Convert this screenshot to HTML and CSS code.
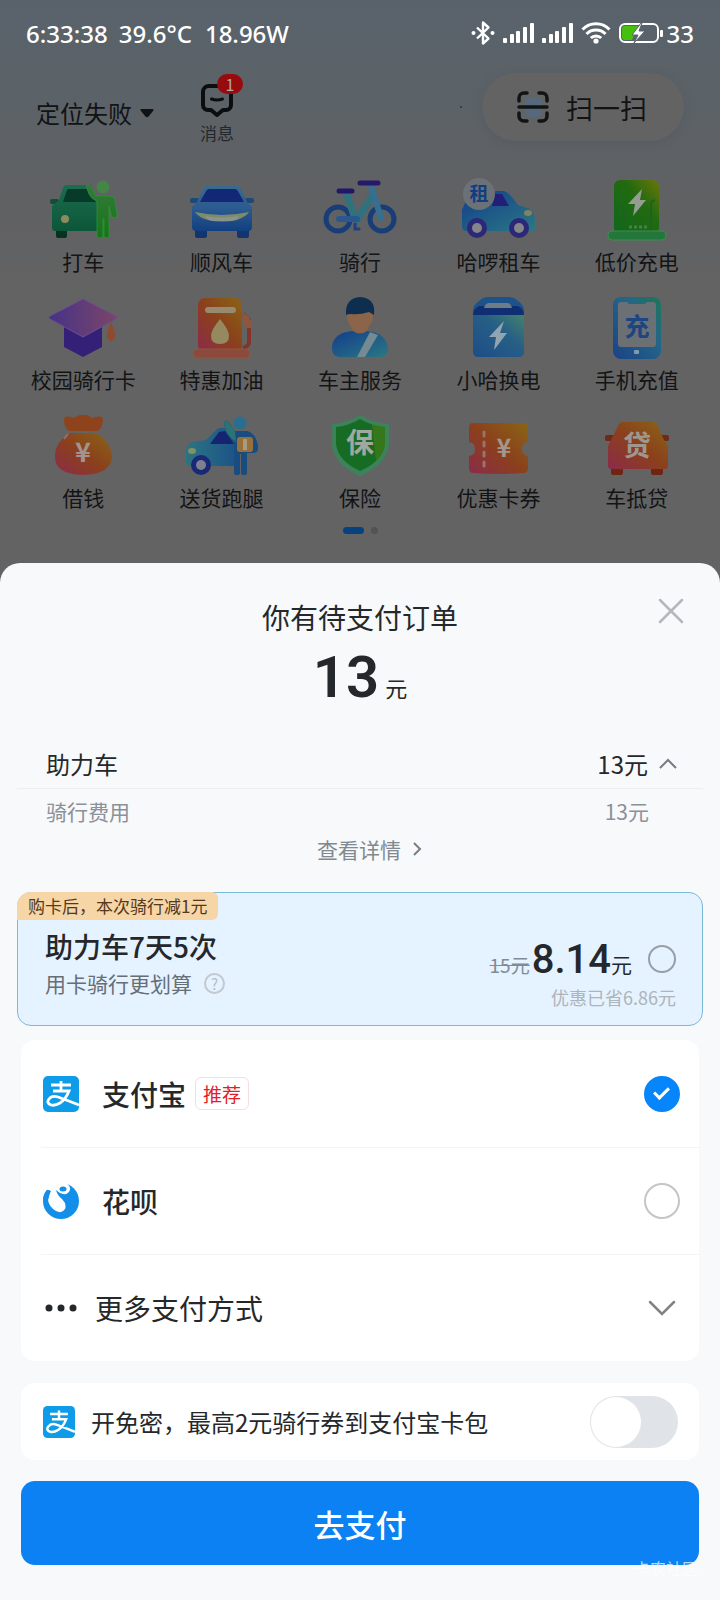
FILE: index.html
```
<!DOCTYPE html>
<html lang="zh-CN">
<head>
  <meta charset="UTF-8" />
  <meta name="viewport" content="width=device-width, initial-scale=1.0"/>
  <title>待支付订单</title>
  <link rel="stylesheet" href="styles.css">
</head>
<body>

<!-- 状态栏 -->
<div class="status-bar">
  <div class="status-left">
    <span>6:33:38</span>
    <span>39.6°C</span>
    <span class="status-power">18.96W</span>
  </div>
  <div class="status-right">
    <svg width="24" height="26" viewBox="0 0 24 26" fill="none" stroke="#fff" stroke-width="2.4">
      <path d="M6 7.500 17.500 18.500 12 23.500V2.500l5.500 5L6 18.500" stroke-linejoin="round"/>
      <circle cx="2.500" cy="13" r="2" fill="#fff" stroke="none"/>
      <circle cx="21.500" cy="13" r="2" fill="#fff" stroke="none"/>
    </svg>
    <svg width="31" height="20" viewBox="0 0 31 20" fill="#fff">
      <rect x="0" y="15" width="4" height="5" rx="1"/><rect x="7" y="11" width="4" height="9" rx="1"/>
      <rect x="13" y="8" width="4" height="12" rx="1"/><rect x="20" y="4" width="4" height="16" rx="1"/>
      <rect x="27" y="0" width="4" height="20" rx="1"/>
    </svg>
    <svg width="31" height="20" viewBox="0 0 31 20" fill="#fff">
      <rect x="0" y="15" width="4" height="5" rx="1"/><rect x="7" y="11" width="4" height="9" rx="1"/>
      <rect x="13" y="8" width="4" height="12" rx="1"/><rect x="20" y="4" width="4" height="16" rx="1"/>
      <rect x="27" y="0" width="4" height="20" rx="1"/>
    </svg>
    <svg width="30" height="22" viewBox="0 0 30 22" fill="none" stroke="#fff" stroke-width="3">
      <path d="M1.500 7.500a19 19 0 0 1 27 0M5.500 12a13.500 13.500 0 0 1 19 0M9.800 16a7.500 7.500 0 0 1 10.400 0"/>
      <circle cx="15" cy="19" r="2.600" fill="#fff" stroke="none"/>
    </svg>
    <svg class="battery" width="44" height="22" viewBox="0 0 44 22">
      <rect x="1" y="2" width="38" height="18" rx="5" fill="none" stroke="#fff" stroke-width="2"/>
      <path d="M6 4h13l-6 14H6a3 3 0 0 1-3-3V7a3 3 0 0 1 3-3z" fill="#45c00d"/>
      <path d="M22 1 13 13h6l-4 8 11-12h-6l3-8z" fill="#fff" stroke="#5a626b" stroke-width="1"/>
      <rect x="41" y="8" width="3" height="7" rx="1" fill="#fff"/>
    </svg>
    <span>33</span>
  </div>
</div>

<!-- 顶部栏 -->
<div class="top-bar">
  <button class="location">定位失败
    <svg width="14" height="9" viewBox="0 0 14 9"><path d="M1.500 0h11q2 0 .5 2L8.500 7.500q-1.500 1.500-3 0L1 2Q-.5 0 1.500 0z" fill="#101214"/></svg>
  </button>
  <button class="message">
    <svg width="34" height="34" viewBox="0 0 34 34" fill="none" stroke="#0c0d0f" stroke-width="4" stroke-linecap="round" stroke-linejoin="round">
      <path d="M9 3h16a6 6 0 0 1 6 6v13a5 5 0 0 1-5 5h-3l-6 5-6-5H8a5 5 0 0 1-5-5V9a6 6 0 0 1 6-6z"/>
      <path d="M11.500 16q5.500 2 11 0" stroke-width="3"/>
    </svg>
    <span class="msg-badge">1</span>
    <span>消息</span>
  </button>
  <span class="speck"></span>
  <button class="scan">
    <svg width="34" height="34" viewBox="0 0 34 34" fill="none" stroke="#111315" stroke-width="3.500" stroke-linecap="round">
      <path d="M12 7h11q2 0 3 3v14q-2 3-4 3H12q-2 0-3-3V10q1-3 3-3z" fill="#56697c" stroke="none"/>
      <path d="M3 11V8a5 5 0 0 1 5-5h3M23 3h3a5 5 0 0 1 5 5v3M31 23v3a5 5 0 0 1-5 5h-3M11 31H8a5 5 0 0 1-5-5v-3M3 17h28"/>
    </svg>
    扫一扫
  </button>
</div>

<!-- 服务入口 -->
<div class="services">
  <div class="service">
    <svg viewBox="0 0 76 64">
      <defs>
        <linearGradient id="gGreen" x1="0" y1="0" x2="0" y2="1"><stop offset="0" stop-color="#1c6d50"/><stop offset="1" stop-color="#0c5638"/></linearGradient>
        <linearGradient id="gLime" x1="0" y1="0" x2="0" y2="1"><stop offset="0" stop-color="#347a3b"/><stop offset="1" stop-color="#167419"/></linearGradient>
        <linearGradient id="gBlue" x1="0" y1="0" x2="0" y2="1"><stop offset="0" stop-color="#3b6c8e"/><stop offset=".5" stop-color="#2b5b91"/><stop offset="1" stop-color="#123f80"/></linearGradient>
        <linearGradient id="gTeal" x1="0" y1="0" x2="1" y2="1"><stop offset="0" stop-color="#123e8b"/><stop offset="1" stop-color="#2b7883"/></linearGradient>
        <linearGradient id="gOrange" x1="0" y1="1" x2="1" y2="0"><stop offset="0" stop-color="#8b2b4a"/><stop offset=".5" stop-color="#8b401c"/><stop offset="1" stop-color="#896516"/></linearGradient>
        <linearGradient id="gPurple" x1="0" y1="0" x2="1" y2="0"><stop offset="0" stop-color="#453387"/><stop offset="1" stop-color="#7c4569"/></linearGradient>
      </defs>
      <rect x="11" y="50" width="11" height="10" rx="2" fill="#06321f"/>
      <rect x="5" y="21" width="9" height="5" rx="2" fill="#124d35"/>
      <path d="M21 7h25l7 17v29H10q-3 0-3-3V28l7-6 4-12q1-3 3-3z" fill="url(#gGreen)"/>
      <path d="M23 11h19l9 13H18l4-12z" fill="#073a29"/>
      <circle cx="20" cy="41" r="4" fill="#8d8a5e"/>
      <path d="M41 8q3-2 5 1l5 9h14q4 0 5 4l2 15q0 3-3 3-2 0-3-3l-2-9v30q0 2-3 2-2 0-2-2V41h-1v17q0 2-3 2-3 0-3-2V23q-6-2-8-7z" fill="url(#gLime)" stroke="#319239" stroke-width=".8"/>
      <circle cx="58" cy="9" r="6.500" fill="#458547"/>
    </svg>
    <span>打车</span>
  </div>
  <div class="service">
    <svg viewBox="0 0 76 64">
      <rect x="11" y="50" width="12" height="10" rx="2" fill="#12356f"/><rect x="53" y="50" width="12" height="10" rx="2" fill="#12356f"/>
      <rect x="6" y="20" width="9" height="5" rx="2" fill="#1c497a"/><rect x="61" y="20" width="9" height="5" rx="2" fill="#1c497a"/>
      <path d="M24 7h28q3 0 5 4l6 13 5 5v20q0 4-4 4H12q-4 0-4-4V29l5-5 6-13q2-4 5-4z" fill="url(#gBlue)"/>
      <path d="M25 11h26q2 0 4 4l5 9H16l5-9q2-4 4-4z" fill="#132777"/>
      <path d="M11 34q27 6 54 0-2 4-12 8-15 3-29 0-10-3-13-8z" fill="#7d8b69"/>
      <path d="M21 38q17 3 34 0-2 5-10 5H31q-8 0-10-5z" fill="#8b938f"/>
    </svg>
    <span>顺风车</span>
  </div>
  <div class="service">
    <svg viewBox="0 0 76 64" fill="none" stroke-linecap="round">
      <circle cx="16" cy="41" r="12" stroke="#193d76" stroke-width="5"/>
      <circle cx="60" cy="41" r="12" stroke="#193d76" stroke-width="5"/>
      <path d="m25 17 8 24M34 43l17-26" stroke="#30717e" stroke-width="7"/>
      <path d="M17 41h18" stroke="#2c578e" stroke-width="6"/>
      <path d="m49 8 10 32" stroke="#356f91" stroke-width="6"/>
      <path d="M17 13h13" stroke="#23156a" stroke-width="5"/>
      <path d="M38 5h18" stroke="#261969" stroke-width="5"/>
      <path d="M33 46v5h4" stroke="#233e80" stroke-width="3"/>
    </svg>
    <span>骑行</span>
  </div>
  <div class="service">
    <svg viewBox="0 0 76 64">
      <path d="M5 25 36 13h8q5 1 14 14l12 4q5 4 5 11v8q0 3-3 3H5q-3-1-3-5V32z" fill="url(#gTeal)"/>
      <path d="M35 16h7l7 12H32z" fill="#231e77"/>
      <ellipse cx="68" cy="35" rx="4" ry="3" fill="#84815c"/>
      <circle cx="17" cy="50" r="10" fill="#2c2777"/><circle cx="17" cy="50" r="5" fill="#84858b"/>
      <circle cx="59" cy="50" r="10" fill="#2c2777"/><circle cx="59" cy="50" r="5" fill="#84858b"/>
      <circle cx="19" cy="16" r="16" fill="#6c7177"/>
      <text x="19" y="23" font-size="19" class="icon-text" fill="#103f80">租</text>
    </svg>
    <span>哈啰租车</span>
  </div>
  <div class="service">
    <svg viewBox="0 0 76 64">
      <defs><linearGradient id="gPile" x1="0" y1="1" x2="1" y2="0"><stop offset="0" stop-color="#0f671d"/><stop offset=".6" stop-color="#226a10"/><stop offset="1" stop-color="#6b760a"/></linearGradient></defs>
      <rect x="15" y="2" width="45" height="54" rx="6" fill="url(#gPile)"/>
      <path d="M25 54V30h-4M52 54V28q0-5 4-6" fill="none" stroke="#1a641b" stroke-width="2"/>
      <path d="M30 49h18" stroke="#4a7f4a" stroke-width="3" stroke-dasharray="3 2"/>
      <rect x="9" y="53" width="58" height="9" rx="4" fill="#23773b" stroke="#3c8d52"/>
      <path d="M43 11 29 26h7l-2 12 13-16h-6z" fill="#949c94"/>
    </svg>
    <span>低价充电</span>
  </div>

  <div class="service">
    <svg viewBox="0 0 76 64">
      <path d="M19 28v23l19 10 19-10V28z" fill="#352077"/>
      <path d="M38 3 71 20q2 2 0 3L38 41 5 23q-2-1 0-3z" fill="url(#gPurple)" stroke="#6b4e91"/>
      <path d="M66 26q-5 11-4 15 1 4 4 4t4-4q1-4-4-15z" fill="#8e4b2f"/>
    </svg>
    <span>校园骑行卡</span>
  </div>
  <div class="service">
    <svg viewBox="0 0 76 64">
      <path d="m59 18 6 6v22q0 4-6 6" fill="none" stroke="#84352b" stroke-width="4"/>
      <path d="m58 16 6 4 3 5v7h-5l-3-5z" fill="#8d563f"/>
      <rect x="14" y="2" width="44" height="54" rx="7" fill="url(#gOrange)"/>
      <rect x="21" y="11" width="31" height="6" rx="3" fill="#988a70"/>
      <path d="M36 23q-9 11-9 17 0 8 9 8t9-8q0-6-9-17z" fill="#94895f"/>
      <rect x="9" y="53" width="57" height="9" rx="4" fill="#8c4a3c" stroke="#8e573e"/>
    </svg>
    <span>特惠加油</span>
  </div>
  <div class="service">
    <svg viewBox="0 0 76 64">
      <path d="M10 50q2-14 22-15h13q19 2 21 17 1 8-7 9H17q-8-1-7-11z" fill="url(#gTeal)"/>
      <path d="M48 36 35 61h8l13-22z" fill="#738b91"/>
      <path d="M25 16h26q1 8-3 13-2 3-3 6-7 5-14 0-1-3-3-6-4-5-3-13z" fill="#8b6449"/>
      <path d="M24 19q-1-17 14-18 16 1 14 18l-5-3q-10 3-18 2-3 0-5 1z" fill="#0d2e4e"/>
    </svg>
    <span>车主服务</span>
  </div>
  <div class="service">
    <svg viewBox="0 0 76 64">
      <defs><linearGradient id="gCell" x1="0" y1="1" x2="1" y2="0"><stop offset="0" stop-color="#1c4d88"/><stop offset=".6" stop-color="#275f86"/><stop offset="1" stop-color="#43826b"/></linearGradient></defs>
      <path d="M28 1h21q5 0 9 4 6 4 6 10v40q0 6-6 6H19q-6 0-6-6V15q0-6 6-10 4-4 9-4z" fill="#1d538b"/>
      <path d="M13 19h51v36q0 6-6 6H19q-6 0-6-6z" fill="url(#gCell)"/>
      <path d="M13 19q0-6 6-9h39q6 3 6 9z" fill="#102f72"/>
      <path d="M28 7h20q3 1 4 5H24q1-4 4-5z" fill="#6d7c86"/>
      <path d="M44 25 29 41h7l-2 13 13-17h-7z" fill="#91a4b0"/>
    </svg>
    <span>小哈换电</span>
  </div>
  <div class="service">
    <svg viewBox="0 0 76 64">
      <defs><linearGradient id="gPhone" x1="0" y1="1" x2="1" y2="0"><stop offset="0" stop-color="#1b4287"/><stop offset=".6" stop-color="#23658a"/><stop offset="1" stop-color="#1d7857"/></linearGradient></defs>
      <rect x="14" y="1" width="48" height="62" rx="8" fill="url(#gPhone)"/>
      <path d="M22 6h6l2 2h16l2-2h6q3 0 3 3v39q0 3-3 3H22q-3 0-3-3V9q0-3 3-3z" fill="#6b7074"/>
      <rect x="35" y="54" width="5" height="4" rx="1" fill="#839aa8"/>
      <text x="38" y="40" font-size="25" class="icon-text" fill="#1c4581">充</text>
    </svg>
    <span>手机充值</span>
  </div>

  <div class="service">
    <svg viewBox="0 0 76 64">
      <path d="M19 6q0-5 6-3l4 1q5-4 9-3 4-1 9 3l4-1q7-2 7 3-1 8-5 11H24q-5-4-5-11z" fill="#8f431c"/>
      <path d="M25 19h26q15 9 16 23 0 18-29 19-29-1-28-19 0-14 15-23z" fill="url(#gOrange)"/>
      <path d="m23 20-4 5" stroke="#967169" stroke-width="2"/>
      <text x="38" y="48" font-size="27" class="icon-text" fill="#a29393">¥</text>
    </svg>
    <span>借钱</span>
  </div>
  <div class="service">
    <svg viewBox="0 0 76 64">
      <defs><linearGradient id="gVan" x1="0" y1="0" x2="1" y2="0"><stop offset="0" stop-color="#2c7481"/><stop offset="1" stop-color="#1d5389"/></linearGradient></defs>
      <path d="M29 19q5-6 11-5l12 8v30H6q-4 0-4-4V36q0-5 6-8l14-2z" fill="url(#gVan)"/>
      <path d="m35 18 6-1 9 13H26z" fill="#152471"/>
      <ellipse cx="8" cy="37" rx="4" ry="3" fill="#809162"/>
      <circle cx="17" cy="51" r="10" fill="#192877"/><circle cx="17" cy="51" r="5" fill="#7d818e"/>
      <path d="M40 8q2-3 5 0l6 9h12q9 2 11 15v4q-1 3-5 3h-6v20q0 2-3 2t-3-2V40h-1v19q0 2-3 2t-3-2V28q-9-7-10-20z" fill="#194c81"/>
      <path d="M40 8q2-3 5 0l6 9 1 11q-11-7-12-20z" fill="#2b7376"/>
      <circle cx="56" cy="9" r="6.500" fill="#296f91"/>
      <rect x="53" y="23" width="16" height="15" rx="3" fill="#987039"/><path d="M59 25h4v11h-4z" fill="#a99b82"/>
    </svg>
    <span>送货跑腿</span>
  </div>
  <div class="service">
    <svg viewBox="0 0 76 64">
      <path d="M38 1q14 8 29 9v20q-2 21-29 32Q12 51 10 30V10q15-1 28-9z" fill="#3c825b"/>
      <path d="M38 5q12 7 25 8v17q-2 17-25 27Q16 47 14 30V13q12-1 24-8z" fill="#176c24"/>
      <path d="M50 10q6 2 13 3v17q-1 10-9 17z" fill="#4d7e18" opacity=".6"/>
      <text x="38" y="39" font-size="28" class="icon-text" fill="#a1a8a1">保</text>
    </svg>
    <span>保险</span>
  </div>
  <div class="service">
    <svg viewBox="0 0 76 64">
      <path d="M13 9h50q5 0 5 5v14q-6 1-6 7t6 7v12q0 5-5 5-25 2-50 0-4 0-4-5V42q6-1 6-7t-6-7V14q0-5 4-5z" fill="url(#gOrange)"/>
      <path d="M24 18v34" stroke="#9a7567" stroke-width="3" stroke-linecap="round" stroke-dasharray="4 6"/>
      <text x="44" y="43" font-size="25" class="icon-text" fill="#a2978e">¥</text>
    </svg>
    <span>优惠卡券</span>
  </div>
  <div class="service">
    <svg viewBox="0 0 76 64">
      <rect x="12" y="50" width="12" height="11" rx="2" fill="#6d2611"/><rect x="52" y="50" width="12" height="11" rx="2" fill="#6d2611"/>
      <rect x="6" y="21" width="10" height="6" rx="2" fill="#6f2917"/><rect x="60" y="21" width="10" height="6" rx="2" fill="#6f2917"/>
      <path d="M24 8h29q4 0 6 4l5 12 5 8v20q0 3-3 3H12q-3 0-3-3V32l4-8 6-12q1-4 5-4z" fill="url(#gOrange)"/>
      <text x="38" y="42" font-size="28" class="icon-text" fill="#a09690">贷</text>
    </svg>
    <span>车抵贷</span>
  </div>
</div>
<div class="pager"><span class="pager-on"></span><span class="pager-off"></span></div>

<!-- 支付弹层 -->
<form class="sheet">
  <button type="button" class="close" aria-label="关闭">
    <svg width="26" height="26" viewBox="0 0 26 26" fill="none" stroke="#b4b8bb" stroke-width="2.500" stroke-linecap="round"><path d="m2 2 22 22M24 2 2 24"/></svg>
  </button>
  <h1 class="title">你有待支付订单</h1>
  <div class="total"><strong>13</strong><span>元</span></div>

  <div class="fee-head">
    <span>助力车</span>
    <span class="fee-price">13元</span>
    <svg width="18" height="12" viewBox="0 0 18 12" fill="none" stroke="#777c80" stroke-width="2"><path d="m1 10 8-8 8 8"/></svg>
  </div>
  <div class="fee-row"><span>骑行费用</span><span>13元</span></div>
  <a class="detail" href="#">查看详情
    <svg width="10" height="16" viewBox="0 0 10 16" fill="none" stroke="#777f86" stroke-width="2"><path d="m1 2 6 6-6 6"/></svg>
  </a>

  <!-- 骑行卡 -->
  <div class="ride-card">
    <span class="card-tag">购卡后，本次骑行减1元</span>
    <div class="card-info">
      <label class="card-name" for="rideCard">助力车7天5次</label>
      <span class="card-desc">用卡骑行更划算 <i class="help">?</i></span>
    </div>
    <div class="card-price">
      <div class="price-line">
        <div class="price"><del>15元</del><strong>8.14</strong><span>元</span></div>
        <input type="checkbox" class="pick pick-small" id="rideCard">
      </div>
      <span class="saved">优惠已省6.86元</span>
    </div>
  </div>

  <!-- 支付方式 -->
  <div class="panel pay-list">
    <label class="pay-row">
      <svg class="pay-icon" viewBox="0 0 36 36"><rect width="36" height="36" rx="5" fill="#0e9ce8"/>
        <path d="M18 5v9M8 9h20M10 15h16q-3 8-9 12-5 3-9 2-5-2-2-6 3-4 9-2 11 4 21 8" fill="none" stroke="#fff" stroke-width="2.800"/></svg>
      <span class="pay-name">支付宝</span>
      <span class="tag">推荐</span>
      <input type="radio" class="pick" name="pay" checked>
    </label>
    <label class="pay-row">
      <svg class="pay-icon" viewBox="0 0 36 36">
        <circle cx="18" cy="18" r="18" fill="#138ee9"/>
        <path d="M9 0 22-1q6 4 5 8-2 5-7 4-4-1-7-4 1 5 6 9 5 5 3 10-3 5-9 2-7-4-8-11 0-5 3-9L2 6z" fill="#fff"/>
        <path d="M0 16Q1 9 5 7q3 0 2 3l-2 7-3 3z" fill="#138ee9"/>
        <ellipse cx="20" cy="6" rx="3.500" ry="2.500" fill="#138ee9"/></svg>
      <span class="pay-name">花呗</span>
      <input type="radio" class="pick" name="pay">
    </label>
    <button type="button" class="pay-row more">
      <svg width="32" height="8" viewBox="0 0 32 8" fill="#25282b"><circle cx="4" cy="4" r="3.500"/><circle cx="16" cy="4" r="3.500"/><circle cx="28" cy="4" r="3.500"/></svg>
      <span>更多支付方式</span>
      <svg class="more-arrow" width="28" height="18" viewBox="0 0 28 18" fill="none" stroke="#7f8386" stroke-width="2.500" stroke-linecap="round"><path d="m2 3 12 12L26 3"/></svg>
    </button>
  </div>

  <label class="panel no-pwd">
    <svg class="pay-icon" viewBox="0 0 36 36"><rect width="36" height="36" rx="5" fill="#0e9ce8"/>
      <path d="M18 5v9M8 9h20M10 15h16q-3 8-9 12-5 3-9 2-5-2-2-6 3-4 9-2 11 4 21 8" fill="none" stroke="#fff" stroke-width="2.800"/></svg>
    <span>开免密，最高2元骑行券到支付宝卡包</span>
    <input type="checkbox" class="switch">
  </label>

  <button type="button" class="submit">去支付</button>
  <span class="watermark">卡农社区</span>
</form>

</body>
</html>
```
FILE: styles.css
```
* {
  box-sizing: border-box;
}

body {
  margin: 0;
  min-height: 100vh;
  display: flex;
  flex-direction: column;
  font-family: "Noto Sans CJK SC", sans-serif;
  color: #25282b;
  background: linear-gradient(#59626b 0, #5c6267 110px, #606163 200px, #636363 300px);
}

button {
  padding: 0;
  border: none;
  background: none;
  font-family: inherit;
  color: inherit;
}

svg {
  flex: none;
}

/* 状态栏 */
.status-bar {
  display: flex;
  justify-content: space-between;
  align-items: center;
  height: 66px;
  padding: 0 26px;
  color: #fff;
  font-family: "Noto Sans", sans-serif;
  font-size: 24px;
  font-weight: 500;
}

.status-left,
.status-right {
  display: flex;
  align-items: center;
  gap: 8px;
}

.status-left {
  gap: 11px;
}

.status-power {
  margin-left: 2px;
}

.status-right span {
  margin-left: -4px;
}

/* 顶部栏 */
.top-bar {
  display: flex;
  align-items: flex-start;
  height: 112px;
  padding: 6px 36px 0;
  color: #111315;
}

.location {
  display: flex;
  align-items: center;
  gap: 8px;
  margin-top: 24px;
  font-size: 24px;
  line-height: 34px;
}

.message {
  position: relative;
  display: flex;
  flex-direction: column;
  align-items: center;
  margin: 11px 0 0 46px;
  font-size: 17px;
  line-height: 32px;
  color: #25282b;
}

.msg-badge {
  position: absolute;
  left: 17px;
  top: -9px;
  width: 26px;
  height: 20px;
  border-radius: 10px;
  background: #970b0c;
  color: #b8a3a3;
  font-size: 16px;
  line-height: 20px;
  text-align: center;
}

.speck {
  width: 2px;
  height: 2px;
  margin: 34px 20px 0 auto;
  background: #3c4044;
}

.scan {
  display: flex;
  align-items: center;
  justify-content: center;
  gap: 16px;
  width: 202px;
  height: 68px;
  margin-top: 1px;
  padding-right: 3px;
  border-radius: 34px;
  background: #636363;
  box-shadow: 0 2px 8px #555c62;
  font-size: 27px;
}

/* 服务入口 */
.services {
  display: grid;
  grid-template-columns: repeat(5, 1fr);
  row-gap: 20px;
  padding: 0 14px;
  color: #131415;
  font-size: 21px;
  line-height: 30px;
}

.service {
  display: flex;
  flex-direction: column;
  align-items: center;
  gap: 4px;
}

.service svg {
  width: 76px;
  height: 64px;
}

.icon-text {
  font-family: "Noto Sans CJK SC", sans-serif;
  font-weight: 700;
  text-anchor: middle;
}

.pager {
  display: flex;
  justify-content: center;
  gap: 7px;
  padding: 15px 0 29px;
}

.pager span {
  height: 7px;
  border-radius: 4px;
}

.pager-on {
  width: 21px;
  background: #07427e;
}

.pager-off {
  width: 7px;
  background: #535353;
}

/* 支付弹层 */
.sheet {
  position: relative;
  flex: 1;
  padding: 34px 17px;
  border-radius: 20px 20px 0 0;
  background: #f7f9fb;
}

.close {
  position: absolute;
  top: 35px;
  right: 36px;
  height: 26px;
}

.title {
  margin: 0;
  font-size: 28px;
  font-weight: 400;
  line-height: 40px;
  text-align: center;
}

.total {
  display: flex;
  justify-content: center;
  align-items: baseline;
  gap: 6px;
  font-size: 22px;
  line-height: 80px;
}

.total strong {
  font-family: Roboto, sans-serif;
  font-size: 58px;
  font-weight: 600;
}

.fee-head {
  display: flex;
  align-items: center;
  height: 62px;
  padding: 12px 26px 0 29px;
  border-bottom: 1px solid #eceef0;
  font-size: 24px;
}

.fee-price {
  margin: 0 11px 0 auto;
}

.fee-row {
  display: flex;
  justify-content: space-between;
  padding: 0 54px 0 29px;
  color: #8b9198;
  font-size: 21px;
  line-height: 44px;
}

.detail {
  display: flex;
  justify-content: center;
  align-items: center;
  gap: 12px;
  padding-left: 20px;
  color: #808990;
  font-size: 21px;
  line-height: 32px;
  text-decoration: none;
}

/* 骑行卡 */
.ride-card {
  position: relative;
  display: flex;
  justify-content: space-between;
  height: 134px;
  margin-top: 27px;
  padding: 32px 26px 0 27px;
  border: 1px solid #7cb9d9;
  border-radius: 14px;
  background: #e5f2ff;
}

.card-tag {
  position: absolute;
  left: -1px;
  top: -1px;
  padding: 0 11px;
  border-radius: 14px 6px 6px 0;
  background: #f6d6a7;
  color: #54391c;
  font-size: 17px;
  line-height: 28px;
}

.card-info {
  display: flex;
  flex-direction: column;
}

.card-name {
  font-size: 28px;
  font-weight: 500;
  line-height: 42px;
}

.card-desc {
  display: flex;
  align-items: center;
  gap: 12px;
  color: #666e76;
  font-size: 21px;
  line-height: 32px;
}

.help {
  width: 21px;
  height: 21px;
  border: 2px solid #c2c9cf;
  border-radius: 50%;
  color: #b7bec5;
  font-size: 15px;
  font-style: normal;
  line-height: 17px;
  text-align: center;
}

.card-price {
  display: flex;
  flex-direction: column;
  align-items: flex-end;
  padding-top: 12px;
}

.price-line {
  display: flex;
  align-items: center;
  height: 44px;
}

.price {
  display: flex;
  align-items: baseline;
  padding-top: 6px;
  font-size: 21px;
  line-height: 44px;
}

.price del {
  margin-right: 2px;
  color: #818b95;
  font-size: 19px;
}

.price strong {
  font-family: Roboto, sans-serif;
  font-size: 40px;
  font-weight: 500;
}

.saved {
  color: #adb4ba;
  font-size: 18px;
  line-height: 32px;
}

/* 单选圆圈 */
.pick {
  appearance: none;
  flex: none;
  position: relative;
  width: 36px;
  height: 36px;
  margin: 0 0 0 auto;
  border: 2px solid #c2c6c9;
  border-radius: 50%;
}

.pick-small {
  width: 28px;
  height: 28px;
  margin-left: 16px;
  border-color: #969fa8;
}

.pick:checked {
  border-color: #0785fa;
  background: #0785fa;
}

.pick:checked::after {
  content: "";
  position: absolute;
  left: 11px;
  top: 6px;
  width: 6px;
  height: 12px;
  border: solid #fff;
  border-width: 0 3px 3px 0;
  transform: rotate(45deg);
}

/* 支付方式 */
.panel {
  margin: 0 4px;
  border-radius: 14px;
  background: #fff;
}

.pay-list {
  margin-top: 14px;
  padding-left: 20px;
}

.pay-row {
  display: flex;
  align-items: center;
  width: 100%;
  height: 107px;
  padding: 0 19px 0 2px;
  font-size: 28px;
}

.pay-row + .pay-row {
  border-top: 1px solid #f2f4f5;
}

.pay-icon {
  width: 36px;
  height: 36px;
}

.pay-name {
  margin-left: 23px;
  font-weight: 500;
}

.tag {
  margin-left: 9px;
  padding: 0 7px;
  border: 1px solid #f7dddf;
  border-radius: 6px;
  color: #df2026;
  font-size: 19px;
  line-height: 31px;
}

.more {
  gap: 18px;
  padding-left: 4px;
}

.more-arrow {
  margin: 0 4px 0 auto;
}

.no-pwd {
  display: flex;
  align-items: center;
  gap: 16px;
  height: 77px;
  margin-top: 22px;
  padding: 0 21px 0 22px;
  font-size: 24px;
}

.no-pwd .pay-icon {
  width: 32px;
  height: 32px;
}

.switch {
  appearance: none;
  flex: none;
  width: 88px;
  height: 52px;
  margin: 0 0 0 auto;
  padding: 1px;
  border-radius: 26px;
  background: #e0e4e8;
}

.switch::after {
  content: "";
  display: block;
  width: 50px;
  height: 50px;
  border-radius: 50%;
  background: #fff;
}

.switch:checked::after {
  margin-left: auto;
}

.submit {
  display: block;
  width: calc(100% - 8px);
  height: 84px;
  margin: 21px 4px 0;
  border-radius: 14px;
  background: #0b81f3;
  color: #fff;
  font-size: 31px;
  font-weight: 500;
}

.watermark {
  position: absolute;
  right: 22px;
  bottom: 20px;
  color: #fff;
  font-size: 16px;
  line-height: 24px;
  opacity: .7;
}
```
